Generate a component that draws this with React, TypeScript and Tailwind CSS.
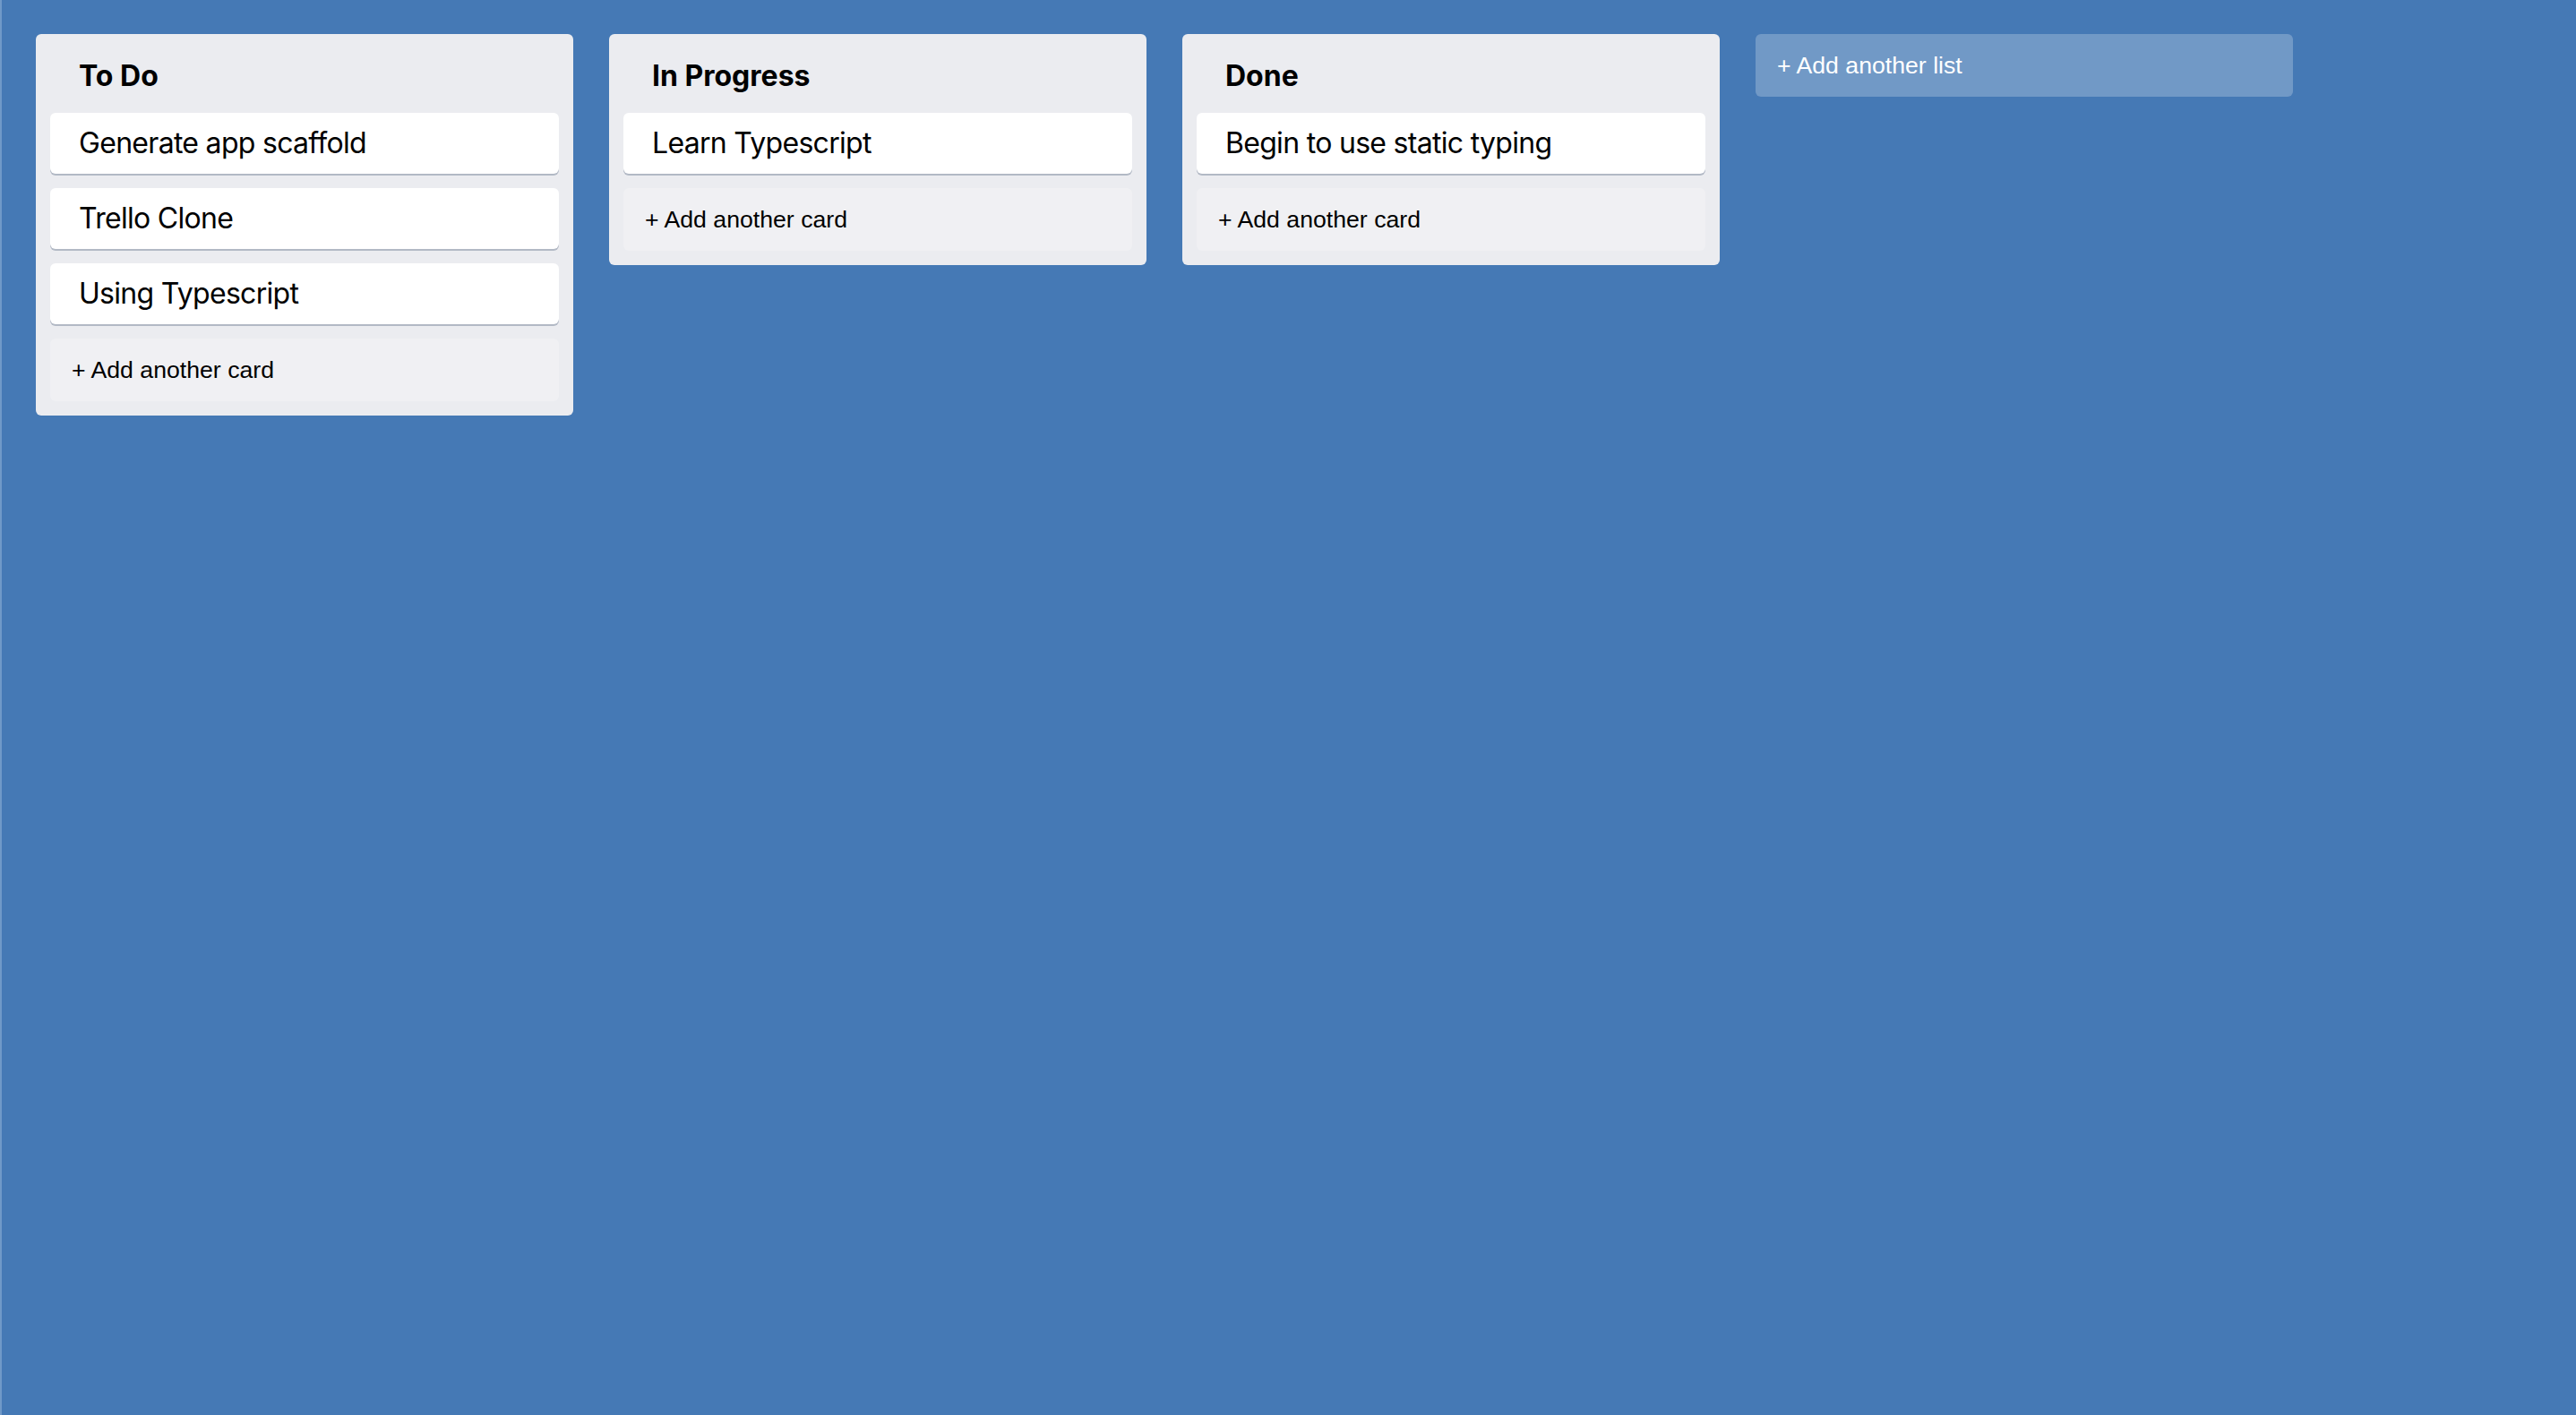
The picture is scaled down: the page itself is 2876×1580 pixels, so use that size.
const lists = [
  { title: "To Do", cards: ["Generate app scaffold", "Trello Clone", "Using Typescript"] },
  { title: "In Progress", cards: ["Learn Typescript"] },
  { title: "Done", cards: ["Begin to use static typing"] },
];

function AddItemButton({ text, dark }: { text: string; dark?: boolean }) {
  return (
    <button
      className={
        "w-full max-w-[600px] rounded-[6px] bg-[#ffffff3d] px-[24px] py-[20px] text-left text-[26.67px] leading-[30px] font-['Liberation_Sans',Arial,sans-serif] " +
        (dark ? "text-black" : "text-white")
      }
    >
      {text}
    </button>
  );
}

function Column({ title, cards }: { title: string; cards: string[] }) {
  return (
    <div className="w-[600px] shrink-0 rounded-[6px] bg-[#ebecf0] p-[16px]">
      <div className="px-[32px] pt-[12px] pb-[22px] text-[32px] leading-[38px] font-bold">{title}</div>
      {cards.map((card, index) => (
        <div
          key={index}
          className="mb-[16px] rounded-[6px] bg-white px-[32px] py-[16px] text-[32px] leading-[36px] tracking-[-0.7px] shadow-[0_2px_0_0_#091e4240]"
        >
          {card}
        </div>
      ))}
      <AddItemButton text="+ Add another card" dark />
    </div>
  );
}

export default function App() {
  return (
    <div className="flex h-screen w-full items-start gap-[40px] border-l-2 border-[#7099c8] bg-[#4579b5] pt-[38px] pl-[38px] font-['Inter',sans-serif] text-black">
      {lists.map((list, index) => (
        <Column key={index} title={list.title} cards={list.cards} />
      ))}
      <div className="w-[600px] shrink-0">
        <AddItemButton text="+ Add another list" />
      </div>
    </div>
  );
}
